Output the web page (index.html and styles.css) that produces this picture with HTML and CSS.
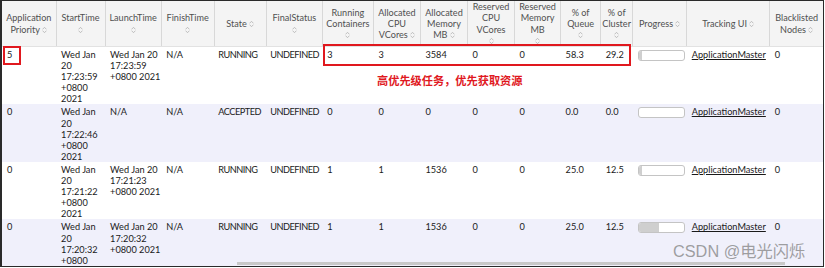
FILE: index.html
```html
<!DOCTYPE html>
<html>
<head>
<meta charset="utf-8">
<link rel="stylesheet" href="styles.css">
</head>
<body>
<div class="frame">
  <table class="apps">
    <colgroup>
      <col class="w55"><col class="w49"><col class="w56"><col class="w53"><col class="w52"><col class="w56"><col class="w51"><col class="w47"><col class="w47"><col class="w47"><col class="w46"><col class="w40"><col class="w32"><col class="w55"><col class="w83"><col class="w53">
    </colgroup>
    <thead>
      <tr>
        <th>Application<br>Priority <i class="sort"></i></th>
        <th>StartTime<br><i class="sort"></i></th>
        <th>LaunchTime<br><i class="sort"></i></th>
        <th>FinishTime<br><i class="sort"></i></th>
        <th>State <i class="sort"></i></th>
        <th>FinalStatus<br><i class="sort"></i></th>
        <th>Running<br>Containers<br><i class="sort"></i></th>
        <th>Allocated<br>CPU<br>VCores <i class="sort"></i></th>
        <th>Allocated<br>Memory<br>MB <i class="sort"></i></th>
        <th>Reserved<br>CPU<br>VCores<br><i class="sort"></i></th>
        <th>Reserved<br>Memory<br>MB<br><i class="sort"></i></th>
        <th>% of<br>Queue<br><i class="sort"></i></th>
        <th>% of<br>Cluster<br><i class="sort"></i></th>
        <th>Progress <i class="sort"></i></th>
        <th>Tracking UI <i class="sort"></i></th>
        <th>Blacklisted<br>Nodes <i class="sort"></i></th>
      </tr>
    </thead>
    <tbody>
      <tr>
        <td>5</td>
        <td>Wed Jan<br>20<br>17:23:59<br>+0800<br>2021</td>
        <td>Wed Jan 20<br>17:23:59<br>+0800 2021</td>
        <td>N/A</td>
        <td class="caps">RUNNING</td>
        <td class="caps">UNDEFINED</td>
        <td>3</td>
        <td>3</td>
        <td>3584</td>
        <td>0</td>
        <td>0</td>
        <td>58.3</td>
        <td>29.2</td>
        <td><div class="bar"><div class="fill" style="width:3px"></div></div></td>
        <td><a class="link">ApplicationMaster</a></td>
        <td>0</td>
      </tr>
      <tr class="alt">
        <td>0</td>
        <td>Wed Jan<br>20<br>17:22:46<br>+0800<br>2021</td>
        <td>N/A</td>
        <td>N/A</td>
        <td class="caps">ACCEPTED</td>
        <td class="caps">UNDEFINED</td>
        <td>0</td>
        <td>0</td>
        <td>0</td>
        <td>0</td>
        <td>0</td>
        <td>0.0</td>
        <td>0.0</td>
        <td><div class="bar"><div class="fill" style="width:0px"></div></div></td>
        <td><a class="link">ApplicationMaster</a></td>
        <td>0</td>
      </tr>
      <tr>
        <td>0</td>
        <td>Wed Jan<br>20<br>17:21:22<br>+0800<br>2021</td>
        <td>Wed Jan 20<br>17:21:23<br>+0800 2021</td>
        <td>N/A</td>
        <td class="caps">RUNNING</td>
        <td class="caps">UNDEFINED</td>
        <td>1</td>
        <td>1</td>
        <td>1536</td>
        <td>0</td>
        <td>0</td>
        <td>25.0</td>
        <td>12.5</td>
        <td><div class="bar"><div class="fill" style="width:3px"></div></div></td>
        <td><a class="link">ApplicationMaster</a></td>
        <td>0</td>
      </tr>
      <tr class="alt">
        <td>0</td>
        <td>Wed Jan<br>20<br>17:20:32<br>+0800</td>
        <td>Wed Jan 20<br>17:20:32<br>+0800 2021</td>
        <td>N/A</td>
        <td class="caps">RUNNING</td>
        <td class="caps">UNDEFINED</td>
        <td>1</td>
        <td>1</td>
        <td>1536</td>
        <td>0</td>
        <td>0</td>
        <td>25.0</td>
        <td>12.5</td>
        <td><div class="bar"><div class="fill" style="width:20px"></div></div></td>
        <td><a class="link">ApplicationMaster</a></td>
        <td>0</td>
      </tr>
    </tbody>
  </table>
  <div class="mark mark-priority"></div>
  <div class="mark mark-resources"></div>
  <div class="note">高优先级任务，优先获取资源</div>
  <div class="scroll-thumb"></div>
  <div class="watermark">CSDN @电光闪烁</div>
</div>
</body>
</html>
```
FILE: styles.css
```css
html, body {
  margin: 0;
  padding: 0;
  background: #ffffff;
}

.frame {
  position: relative;
  width: 824px;
  height: 267px;
  box-sizing: border-box;
  border: 1px solid #2a2a2a;
  border-left-width: 2px;
  overflow: hidden;
  background: #ffffff;
}

.apps {
  table-layout: fixed;
  border-collapse: collapse;
  border-spacing: 0;
  width: 821px;
  font-family: Lato, "Open Sans", sans-serif;
  font-size: 9.2px;
  color: #1a1a1a;
}

.w55 { width: 54px; }
.w49 { width: 49px; }
.w56 { width: 56px; }
.w53 { width: 53px; }
.w52 { width: 52px; }
.w51 { width: 51px; }
.w47 { width: 47px; }
.w46 { width: 46px; }
.w40 { width: 40px; }
.w32 { width: 32px; }
.w83 { width: 83px; }

.apps th {
  height: 45px;
  padding: 0 1px;
  background: #f4f4f4;
  border-right: 1px solid #d8d8d8;
  border-bottom: 1px solid #e2e2e2;
  color: #505050;
  font-size: 9.1px;
  font-weight: normal;
  line-height: 11.2px;
  text-align: center;
  vertical-align: middle;
  white-space: nowrap;
}

.apps th:last-child {
  border-right: none;
}

.sort {
  display: inline-block;
  width: 5px;
  height: 8px;
  vertical-align: -1px;
  background: url("data:image/svg+xml;utf8,<svg xmlns='http://www.w3.org/2000/svg' width='5' height='8' viewBox='0 0 5 8'><path d='M0.6 3.3 L2.5 1.3 L4.4 3.3 M0.6 4.7 L2.5 6.7 L4.4 4.7' fill='none' stroke='%23b0b0b0' stroke-width='0.8'/></svg>") no-repeat center;
}

.apps td {
  padding: 2px 2px 0 5px;
  line-height: 11.1px;
  vertical-align: top;
  white-space: nowrap;
  height: 55px;
}

.apps td.caps {
  letter-spacing: -0.5px;
  padding-left: 4px;
}

.apps tr.alt td {
  background: #f0f0fb;
}

.bar {
  width: 45px;
  height: 9px;
  margin-top: 1px;
  border: 1px solid #c4c4c4;
  border-radius: 3px;
  background: #ffffff;
  overflow: hidden;
}

.fill {
  height: 100%;
  background: #cfcfcf;
}

.link {
  color: #1a1a1a;
  text-decoration: underline;
}

.mark {
  position: absolute;
  border: 2px solid #e0181e;
  box-sizing: border-box;
}

.mark-priority {
  left: 1px;
  top: 45px;
  width: 18px;
  height: 19px;
}

.mark-resources {
  left: 321px;
  top: 43px;
  width: 308px;
  height: 22px;
}

.note {
  position: absolute;
  left: 375px;
  top: 71px;
  font-family: "Noto Sans CJK SC", sans-serif;
  font-size: 11.2px;
  font-weight: bold;
  color: #e0181e;
  line-height: 16px;
}

.scroll-thumb {
  position: absolute;
  left: 235px;
  bottom: 1px;
  width: 548px;
  height: 3px;
  background: #c8c8c8;
}

.watermark {
  position: absolute;
  left: 671px;
  top: 240px;
  font-family: "Liberation Sans", "Noto Sans CJK SC", sans-serif;
  font-size: 16.3px;
  color: rgba(130, 130, 130, 0.75);
  line-height: 20px;
}
```
